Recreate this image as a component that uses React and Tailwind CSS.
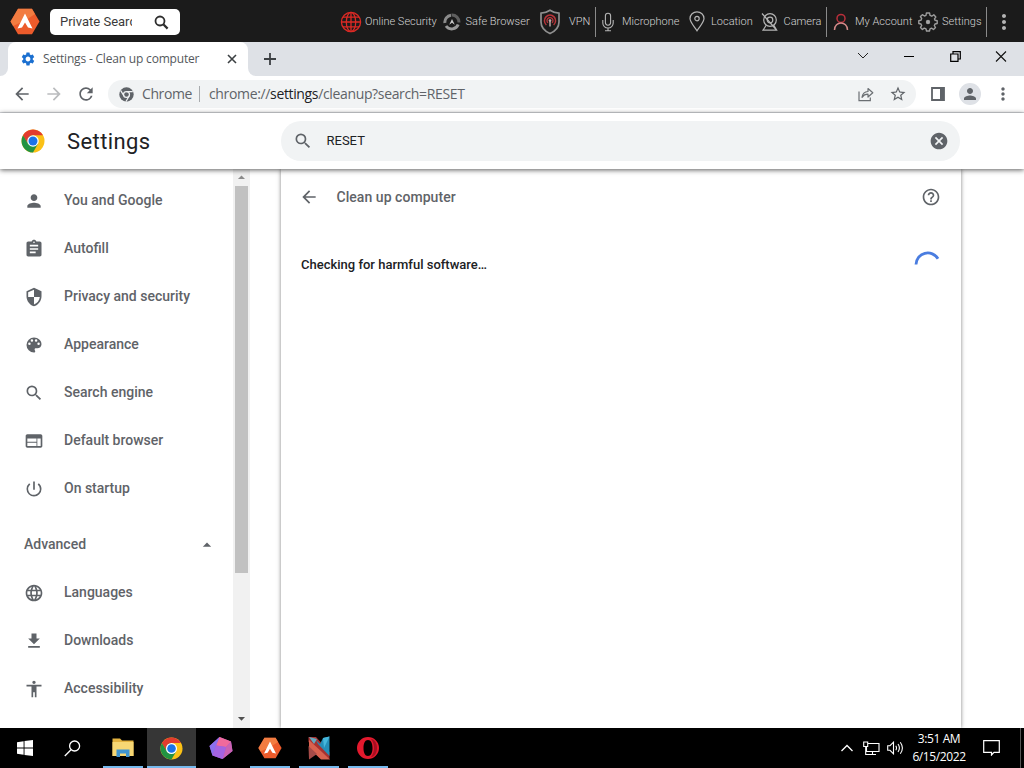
import React from 'react';
import {
  MdPerson, MdAssignment, MdSecurity, MdSearch, MdWeb, MdPowerSettingsNew,
  MdLanguage, MdFileDownload, MdAccessibility, MdArrowBack, MdArrowForward, MdRefresh,
  MdHelpOutline, MdCancel, MdMoreVert, MdStarBorder, MdSettings, MdArrowDropUp, MdArrowDropDown,
} from 'react-icons/md';

/* ---------- Logos and custom icons ---------- */

const ChromeLogo = ({ size = 24 }) => (
  <svg width={size} height={size} viewBox="0 0 48 48">
    <circle cx="24" cy="24" r="23" fill="#fbc116" />
    <path d="M4.1 12.5 A23 23 0 0 0 24 47 L34 29.7 L24 24 L14 29.7 Z" fill="#229342" />
    <path d="M4.1 12.5 L14 29.7 L24 12.5 Z" fill="#229342" />
    <path d="M4.1 12.5 A23 23 0 0 1 43.9 12.5 H24 A11.5 11.5 0 0 0 14 18.5 L13 27 Z" fill="#e33b2e" />
    <circle cx="24" cy="24" r="11.5" fill="#fff" />
    <circle cx="24" cy="24" r="9" fill="#1a73e8" />
  </svg>
);

const ChromeMono = () => (
  <svg width="15" height="15" viewBox="0 0 48 48">
    <circle cx="24" cy="24" r="23" fill="#5f6368" />
    <circle cx="24" cy="24" r="9.5" fill="none" stroke="#f1f3f4" strokeWidth="4" />
    <path d="M24 14.5 H44 M15.8 28.7 L5.6 11.5 M32.2 28.7 L22 47" stroke="#f1f3f4" strokeWidth="4" />
  </svg>
);

const AuraLogo = ({ width = 30, height = 27 }) => (
  <svg width={width} height={height} viewBox="0 0 30 27">
    <path d="M8 0.8 H22 L29.5 13.5 L22 26.2 H8 L0.5 13.5 Z" fill="#ec5b2b" />
    <path d="M8 0.8 H22 L25 6 L16 12 L3 18 L0.5 13.5 Z" fill="#f58a4b" opacity="0.7" />
    <path d="M15 5.5 L22.5 20.5 L18 19.5 L15 14.5 L12 19.5 L7.5 20.5 Z" fill="#fff" />
  </svg>
);

const PaletteIcon = ({ size, className }) => (
  <svg width={size} height={size} viewBox="0 0 24 24" fill="currentColor" className={className}>
    <path d="M12 3a9 9 0 0 0 0 18c.83 0 1.5-.67 1.5-1.5 0-.39-.15-.74-.39-1.01-.23-.26-.38-.61-.38-.99 0-.83.67-1.5 1.5-1.5H16c2.76 0 5-2.24 5-5 0-4.42-4.03-8-9-8zm-5.5 9a1.5 1.5 0 1 1 0-3 1.5 1.5 0 0 1 0 3zm3-4a1.5 1.5 0 1 1 0-3 1.5 1.5 0 0 1 0 3zm5 0a1.5 1.5 0 1 1 0-3 1.5 1.5 0 0 1 0 3zm3 4a1.5 1.5 0 1 1 0-3 1.5 1.5 0 0 1 0 3z" />
  </svg>
);

const GlobeRed = () => (
  <svg width="22" height="22" viewBox="0 0 22 22" fill="none" stroke="#dc2a25" strokeWidth="1.3">
    <circle cx="11" cy="11" r="9.6" />
    <ellipse cx="11" cy="11" rx="4.7" ry="9.6" />
    <path d="M11 1.4 V20.6 M1.4 11 H20.6 M3 6.2 H19 M3 15.8 H19" />
  </svg>
);

const SafeBrowserIcon = () => (
  <svg width="18" height="18" viewBox="0 0 18 18" fill="none">
    <path d="M1.9 10 A7 7 0 0 1 8 2.2" stroke="#8b8b8b" strokeWidth="3" />
    <path d="M8.6 2.1 A7 7 0 0 1 16 9.5" stroke="#5f5f5f" strokeWidth="3" />
    <path d="M15.2 11.5 A7 7 0 0 1 3 13" stroke="#999" strokeWidth="3" />
    <path d="M9 6 L11.8 11.8 L9 9.8 L6.2 11.8 Z" fill="#c9c9c9" />
  </svg>
);

const VpnIcon = () => (
  <svg width="22" height="26" viewBox="0 0 22 26" fill="none">
    <path d="M11 1.2 C14 3.2 17 4 20 4.2 V13 C20 18.5 16.5 22 11 24.6 C5.5 22 2 18.5 2 13 V4.2 C5 4 8 3.2 11 1.2 Z" stroke="#8f8f8f" strokeWidth="1.7" />
    <path d="M7.4 16 A5.6 5.6 0 1 1 14.6 16" stroke="#b8353a" strokeWidth="1.5" />
    <path d="M9 13.8 A3 3 0 1 1 13 13.8" stroke="#b8353a" strokeWidth="1.3" />
    <circle cx="11" cy="11.6" r="1.3" fill="#c7a5a5" />
    <path d="M11 12 V17.5" stroke="#b7a5a5" strokeWidth="1.5" />
  </svg>
);

const MicIcon = () => (
  <svg width="12" height="20" viewBox="0 0 12 20" fill="none" stroke="#b5b5b5" strokeWidth="1.1">
    <rect x="3.4" y="1.2" width="5.2" height="12" rx="2.6" />
    <path d="M0.8 8 V11 A5.2 5 0 0 0 11.2 11 V8 M6 16 V18.6 M3 18.8 H9" />
  </svg>
);

const PinIcon = () => (
  <svg width="16" height="21" viewBox="0 0 16 21" fill="none" stroke="#b5b5b5" strokeWidth="1.2">
    <path d="M8 19.8 C5.5 15.5 1 11.5 1 7.6 A7 6.8 0 0 1 15 7.6 C15 11.5 10.5 15.5 8 19.8 Z" />
    <circle cx="8" cy="7.6" r="2.2" />
  </svg>
);

const CameraIcon = () => (
  <svg width="18" height="20" viewBox="0 0 18 20" fill="none" stroke="#b5b5b5" strokeWidth="1.2">
    <circle cx="9" cy="8" r="6.3" />
    <circle cx="9" cy="8" r="2.8" />
    <path d="M1 1.5 L15.5 18 M5.2 13.2 L2 18.2 H15.7 L12.8 13.2" />
  </svg>
);

const AccountIcon = () => (
  <svg width="16" height="18" viewBox="0 0 16 18" fill="none" strokeWidth="1.5">
    <circle cx="8" cy="5.4" r="4" stroke="#b92f3b" />
    <path d="M1.5 17 C1.5 7.8 14.5 7.8 14.5 17" stroke="#d58a8a" />
  </svg>
);

const GearOutline = () => (
  <svg width="20" height="20" viewBox="0 0 20 20" fill="none" stroke="#9d9d9d" strokeWidth="1.4" strokeLinejoin="round">
    <path d="M8.4 1 H11.6 L12 3.4 L13.8 4.2 L15.8 2.8 L17.8 5 L16.5 6.9 L17 8.3 L19.2 8.7 V11.5 L17 12 L16.3 13.5 L17.5 15.5 L15.5 17.5 L13.5 16.2 L12 16.8 L11.5 19 H8.5 L8 16.8 L6.3 16.1 L4.4 17.4 L2.5 15.4 L3.7 13.5 L3 12 L0.8 11.5 V8.6 L3 8.2 L3.7 6.5 L2.4 4.6 L4.4 2.7 L6.4 4 L8 3.3 Z" />
    <circle cx="10" cy="10" r="1.5" fill="#b5b5b5" />
  </svg>
);

const SearchBold = () => (
  <svg width="15" height="15" viewBox="0 0 15 15" fill="none" stroke="#2e2e2e">
    <circle cx="6" cy="6" r="4.5" strokeWidth="1.8" />
    <path d="M9.3 9.3 L13.6 13.6" strokeWidth="2.3" />
  </svg>
);

const ShareIcon = () => (
  <svg width="16" height="15" viewBox="0 0 16 15" fill="none" stroke="#6b6f73" strokeWidth="1.2">
    <path d="M1 4.5 V13.7 H12.3 V10.5" />
    <path d="M4 10.3 C4.5 6.5 7 4.6 10 4.5 V1.5 L14.8 5.8 L10 10 V7.2 C7.5 7.2 5.5 8 4 10.3 Z" strokeLinejoin="round" />
  </svg>
);

/* ---------- Security toolbar ---------- */

const ToolbarItem = ({ icon, label, className, iconClass }) => (
  <div className={`flex items-center shrink-0 ${className}`}>
    <span className={`flex items-center shrink-0 ${iconClass}`}>{icon}</span>
    <span className="whitespace-nowrap pt-px">{label}</span>
  </div>
);

const Divider = () => <div className="w-px h-[30px] bg-[#8a8a8a] shrink-0" />;

const SecurityToolbar = () => (
  <div className="h-[42px] bg-[#1b1b1b] flex items-center text-[11px] font-light text-[#d4d4d4] pb-px">
    <div className="w-[50px] pl-[10px] pt-px shrink-0"><AuraLogo /></div>
    <div className="w-[130px] h-[26px] mt-[3px] bg-white rounded-[5px] flex items-center shrink-0">
      <span className="w-[82px] pl-[10px] overflow-hidden whitespace-nowrap text-[13px] font-normal text-[#3a3a3a]">Private Search</span>
      <span className="ml-[22px]"><SearchBold /></span>
    </div>
    <div className="ml-[160px] flex items-center pt-[2px]">
      <ToolbarItem icon={<GlobeRed />} label="Online Security" className="w-[103px]" iconClass="w-[25px]" />
      <ToolbarItem icon={<SafeBrowserIcon />} label="Safe Browser" className="w-[96px]" iconClass="w-[22.5px]" />
      <ToolbarItem icon={<VpnIcon />} label="VPN" className="w-[56px]" iconClass="w-[30px]" />
      <Divider />
      <ToolbarItem icon={<MicIcon />} label="Microphone" className="w-[93px]" iconClass="w-[26px] pl-[6px]" />
      <ToolbarItem icon={<PinIcon />} label="Location" className="w-[72px]" iconClass="w-[22px]" />
      <ToolbarItem icon={<CameraIcon />} label="Camera" className="w-[65px]" iconClass="w-[22.5px]" />
      <Divider />
      <ToolbarItem icon={<AccountIcon />} label="My Account" className="w-[91px]" iconClass="w-[28px] pl-[6px]" />
      <ToolbarItem icon={<GearOutline />} label="Settings" className="w-[68px]" iconClass="w-[24px]" />
      <Divider />
      <MdMoreVert size={24} className="ml-[5px] text-[#b4b4b4]" />
    </div>
  </div>
);

/* ---------- Browser chrome ---------- */

const TabStrip = () => (
  <div className="h-[34px] bg-[#dee1e6] flex font-['Open_Sans',sans-serif]">
    <div className="w-2 bg-white"><div className="h-full bg-[#dee1e6] rounded-br-lg" /></div>
    <div className="w-[240px] bg-white rounded-t-lg flex items-center pl-3">
      <MdSettings size={16} className="text-[#1a6fd0]" />
      <span className="ml-[7px] w-[184px] text-[12px] tracking-[-0.19px] text-[#54585c] whitespace-nowrap">Settings - Clean up computer</span>
      <svg width="10" height="10" viewBox="0 0 10 10" stroke="#3c4043" strokeWidth="1.6"><path d="M1 1 L9 9 M9 1 L1 9" /></svg>
    </div>
    <div className="w-2 bg-white"><div className="h-full bg-[#dee1e6] rounded-bl-lg" /></div>
    <svg className="ml-[8px] mt-[11px]" width="12" height="12" viewBox="0 0 12 12" stroke="#3c4043" strokeWidth="1.8"><path d="M6 0 V12 M0 6 H12" /></svg>
    <div className="ml-auto flex items-start pt-[9px] pr-[17px]">
      <svg className="mt-px mr-[35px]" width="12" height="8" viewBox="0 0 12 8" fill="none" stroke="#222"><path d="M1 1 L6 6 L11 1" /></svg>
      <svg className="mr-[36px]" width="10" height="11" viewBox="0 0 10 11" stroke="#000"><path d="M0 5.5 H10" /></svg>
      <svg className="mr-[34px]" width="11" height="11" viewBox="0 0 11 11" fill="none" stroke="#000" strokeWidth="1.2"><path d="M0.7 3 H8 V10.3 H0.7 Z M3 3 V0.7 H10.3 V8 H8" /></svg>
      <svg width="12" height="12" viewBox="0 0 12 12" stroke="#111" strokeWidth="1.1"><path d="M1 0.5 L11 10.5 M11 0.5 L1 10.5" /></svg>
    </div>
  </div>
);

const AddressBar = () => (
  <div className="h-[37px] bg-white border-b border-[#dadce0] flex items-center text-[#5f6368]">
    <MdArrowBack size={20} className="ml-[12px]" />
    <MdArrowForward size={20} className="ml-[12px] text-[#babcbe]" />
    <MdRefresh size={20} className="ml-[12px]" />
    <div className="ml-[12px] w-[808px] h-7 rounded-full bg-[#f1f3f4] flex items-center pl-[11px] font-['Open_Sans',sans-serif] text-[14px]">
      <ChromeMono />
      <span className="ml-[8px] w-[57px] tracking-[-0.4px] pb-px">Chrome</span>
      <span className="w-px h-4 bg-[#a8abae]" />
      <span className="ml-[9px] tracking-[-0.35px] whitespace-nowrap pb-px">chrome://<span className="text-[#202124]">settings</span>/cleanup?search=RESET</span>
      <span className="ml-auto flex items-center pr-[9px]">
        <ShareIcon />
        <MdStarBorder size={18} className="ml-[15px]" />
      </span>
    </div>
    <svg className="ml-[15px]" width="14" height="14" viewBox="0 0 14 14"><path d="M1 1 H13 V13 H1 Z" fill="none" stroke="#5f6368" strokeWidth="1.8" /><path d="M9 1 H13 V13 H9 Z" fill="#5f6368" /></svg>
    <div className="ml-[14px] w-[22px] h-[22px] rounded-full bg-[#dee1e6] flex items-center justify-center">
      <MdPerson size={18} />
    </div>
    <MdMoreVert size={20} className="ml-[12px]" />
  </div>
);

/* ---------- Settings page ---------- */

const mainItems = [
  { label: 'You and Google', icon: MdPerson },
  { label: 'Autofill', icon: MdAssignment },
  { label: 'Privacy and security', icon: MdSecurity },
  { label: 'Appearance', icon: PaletteIcon },
  { label: 'Search engine', icon: MdSearch },
  { label: 'Default browser', icon: MdWeb },
  { label: 'On startup', icon: MdPowerSettingsNew },
];

const advancedItems = [
  { label: 'Languages', icon: MdLanguage },
  { label: 'Downloads', icon: MdFileDownload },
  { label: 'Accessibility', icon: MdAccessibility },
];

const MenuItem = ({ label, icon: Icon }) => (
  <div className="h-12 flex items-center pl-6">
    <Icon size={20} className="shrink-0 mt-px" />
    <span className="ml-5">{label}</span>
  </div>
);

const SettingsHeader = () => (
  <div className="relative z-10 h-[56px] shrink-0 bg-white flex items-center shadow-[0_1px_5px_rgba(0,0,0,0.65)]">
    <div className="ml-[21px]"><ChromeLogo size={24} /></div>
    <h1 className="ml-[22px] w-[214px] text-[22px] tracking-[0.4px] text-[#202124]">Settings</h1>
    <div className="w-[679px] h-10 rounded-full bg-[#f1f3f4] flex items-center pl-3 pr-[11px] text-[#5f6368]">
      <MdSearch size={20} />
      <span className="ml-[13.5px] text-[13px] text-[#202124]">RESET</span>
      <MdCancel size={20} className="ml-auto" />
    </div>
  </div>
);

const Sidebar = () => (
  <div className="w-[233px] text-[14px] font-medium text-[#5f6368] pt-[7px] shrink-0">
    {mainItems.map((item) => <MenuItem key={item.label} {...item} />)}
    <div className="h-12 mt-2 pl-6 pr-[16px] flex items-center justify-between">
      <span>Advanced</span>
      <MdArrowDropUp size={20} className="mt-px" />
    </div>
    {advancedItems.map((item) => <MenuItem key={item.label} {...item} />)}
  </div>
);

const Scrollbar = () => (
  <div className="w-[17px] shrink-0 bg-[#f1f1f1] flex flex-col items-center text-[#505050]">
    <MdArrowDropUp size={17} className="h-[17px] text-[#8b8b8b]" />
    <div className="w-[13px] h-[387px] bg-[#c1c1c1]" />
    <MdArrowDropDown size={17} className="mt-auto mb-px" />
  </div>
);

const CleanupCard = () => (
  <div className="ml-[31px] w-[680px] bg-white shadow-[0_0_4px_rgba(0,0,0,0.5)]">
    <div className="h-[56px] flex items-center pl-[18px] pr-[20px] text-[#5f6368]">
      <MdArrowBack size={20} />
      <span className="ml-[17.5px] text-[14px] font-medium tracking-[0.05px]">Clean up computer</span>
      <MdHelpOutline size={20} className="ml-auto" />
    </div>
    <div className="h-[80px] flex items-center justify-between px-[20px]">
      <span className="text-[13px] font-medium text-[#202124]">Checking for harmful software…</span>
      <svg width="28" height="28" viewBox="0 0 28 28" fill="none">
        <path d="M3 13.5 A11.8 11.8 0 0 1 25 7.8" stroke="#4a7de0" strokeWidth="2.8" />
      </svg>
    </div>
  </div>
);

/* ---------- Windows taskbar ---------- */

const TaskButton = ({ children, open, active }) => (
  <div className={`w-[49px] h-10 flex flex-col items-center ${active ? 'bg-[#363636]' : ''}`}>
    <div className="h-[38px] pt-[2px] flex items-center">{children}</div>
    {open && <div className={`h-[2px] bg-[#76b9ed] ${active ? 'w-full' : 'w-10'}`} />}
  </div>
);

const Taskbar = () => (
  <div className="h-10 shrink-0 bg-black flex items-center text-white">
    <div className="w-[49px] flex justify-center">
      <svg width="16" height="16" viewBox="0 0 16 16" fill="#fff"><path d="M0 2.2 L6.6 1.2 V7.5 H0 Z M7.5 1.1 L16 0 V7.5 H7.5 Z M0 8.4 H6.6 V14.8 L0 13.8 Z M7.5 8.4 H16 V16 L7.5 14.9 Z" /></svg>
    </div>
    <div className="w-[49px] pl-[15px]">
      <svg width="17" height="17" viewBox="0 0 17 17" fill="none" stroke="#fff" strokeWidth="1.3"><circle cx="10.6" cy="6" r="5" /><path d="M7 9.7 L0.8 16" /></svg>
    </div>
    <TaskButton open>
      <svg width="22" height="20" viewBox="0 0 22 20">
        <path d="M0.5 0.5 H8 L10 2.5 H21.5 V18 H0.5 Z" fill="#e4b340" />
        <path d="M0.5 4 H21.5 V18 H0.5 Z" fill="#f7d774" />
        <path d="M4.5 19 V11.5 H17.5 V19 H14 V15.5 H8 V19 Z" fill="#3f94cf" />
      </svg>
    </TaskButton>
    <TaskButton open active><ChromeLogo size={23} /></TaskButton>
    <TaskButton>
      <svg width="24" height="24" viewBox="0 0 24 24">
        <path d="M10.5 1 L22 5.5 L23.5 15 L13.5 23 L3.5 19.5 L0.5 10 Z" fill="#a45bd0" />
        <path d="M10.5 1 L22 5.5 L17 11 L7 9.5 Z" fill="#f06a9c" />
        <path d="M10.5 1 L7 9.5 L3.5 19.5 L0.5 10 Z" fill="#8b70ee" />
        <path d="M22 5.5 L23.5 15 L13.5 23 L17 11 Z" fill="#cc62b2" />
        <path d="M3.5 19.5 L13.5 23 L17 11 L7 9.5 Z" fill="#a564e2" />
      </svg>
    </TaskButton>
    <TaskButton open><AuraLogo width={24} height={22} /></TaskButton>
    <TaskButton open>
      <svg width="22" height="24" viewBox="0 0 22 24">
        <path d="M0.5 1 H8 L21.5 16 V23.5 L0.5 6 Z" fill="#a83230" />
        <path d="M8 4 L12 8 L15 2 L21.5 0.5 V20 L10 8 Z" fill="#258eb8" />
        <path d="M1 4 L22 23.5 H13 L1 12 Z" fill="#d9624f" />
        <path d="M0.5 10 L9 18 L1 23.5 Z" fill="#a64b48" />
        <path d="M1 1 L9 3 L6 8 Z" fill="#64a9bf" />
        <path d="M15 2 L16 12 L21.5 0.5 Z" fill="#46b7dc" />
      </svg>
    </TaskButton>
    <TaskButton open>
      <svg width="24" height="24" viewBox="0 0 24 24">
        <path fillRule="evenodd" d="M12 1 A11 11 0 1 0 12 23 A11 11 0 1 0 12 1 Z M12 4 C15 4 16.5 7.5 16.5 12 S15 20 12 20 S7.5 16.5 7.5 12 S9 4 12 4 Z" fill="#e3192d" />
        <path d="M15 3 C23 4 23 20 15 21 C19 16 19 8 15 3 Z" fill="#a70e21" />
      </svg>
    </TaskButton>

    {/* System tray */}
    <div className="ml-auto flex items-center">
      <svg width="12" height="8" viewBox="0 0 12 8" fill="none" stroke="#fff" strokeWidth="1.3"><path d="M0.5 7 L6 1.5 L11.5 7" /></svg>
      <svg className="ml-[10px]" width="17" height="15" viewBox="0 0 17 15" fill="none" stroke="#fff" strokeWidth="1.1"><path d="M5 2.5 H16 V10.5 H3.5 V6 M9.5 10.5 V13.5 M6 13.5 H13 M0.7 1 H4.7 V5.5 H0.7 Z M2.7 5.5 V13.5 H6" /></svg>
      <svg className="ml-[7px]" width="17" height="14" viewBox="0 0 17 14" fill="none" stroke="#fff" strokeWidth="1.1"><path d="M0.7 4.7 H3 L6.5 1.2 V12.8 L3 9.3 H0.7 Z M8.8 4.8 Q10.2 7 8.8 9.2 M11 3 Q13.8 7 11 11 M13.3 1.2 Q17.5 7 13.3 12.8" /></svg>
      <div className="ml-[5px] w-[60px] text-center text-[12px] leading-[18px] tracking-[-0.4px] font-['Open_Sans',sans-serif] whitespace-nowrap">
        <div>3:51 AM</div>
        <div>6/15/2022</div>
      </div>
      <svg className="ml-[14px]" width="17" height="16" viewBox="0 0 17 16" fill="none" stroke="#fff" strokeWidth="1.2"><path d="M0.7 0.7 H16.3 V12.3 H11 L8.5 15 V12.3 H0.7 Z" /></svg>
      <div className="ml-[20px] mr-[3px] w-px h-10 bg-[#555]" />
    </div>
  </div>
);

const App = () => (
  <div className="w-[1024px] h-[768px] overflow-hidden flex flex-col bg-white font-[Roboto,sans-serif]">
    <SecurityToolbar />
    <TabStrip />
    <AddressBar />
    <SettingsHeader />
    <div className="flex flex-1 min-h-0 overflow-hidden">
      <Sidebar />
      <Scrollbar />
      <CleanupCard />
    </div>
    <Taskbar />
  </div>
);

export default App;
